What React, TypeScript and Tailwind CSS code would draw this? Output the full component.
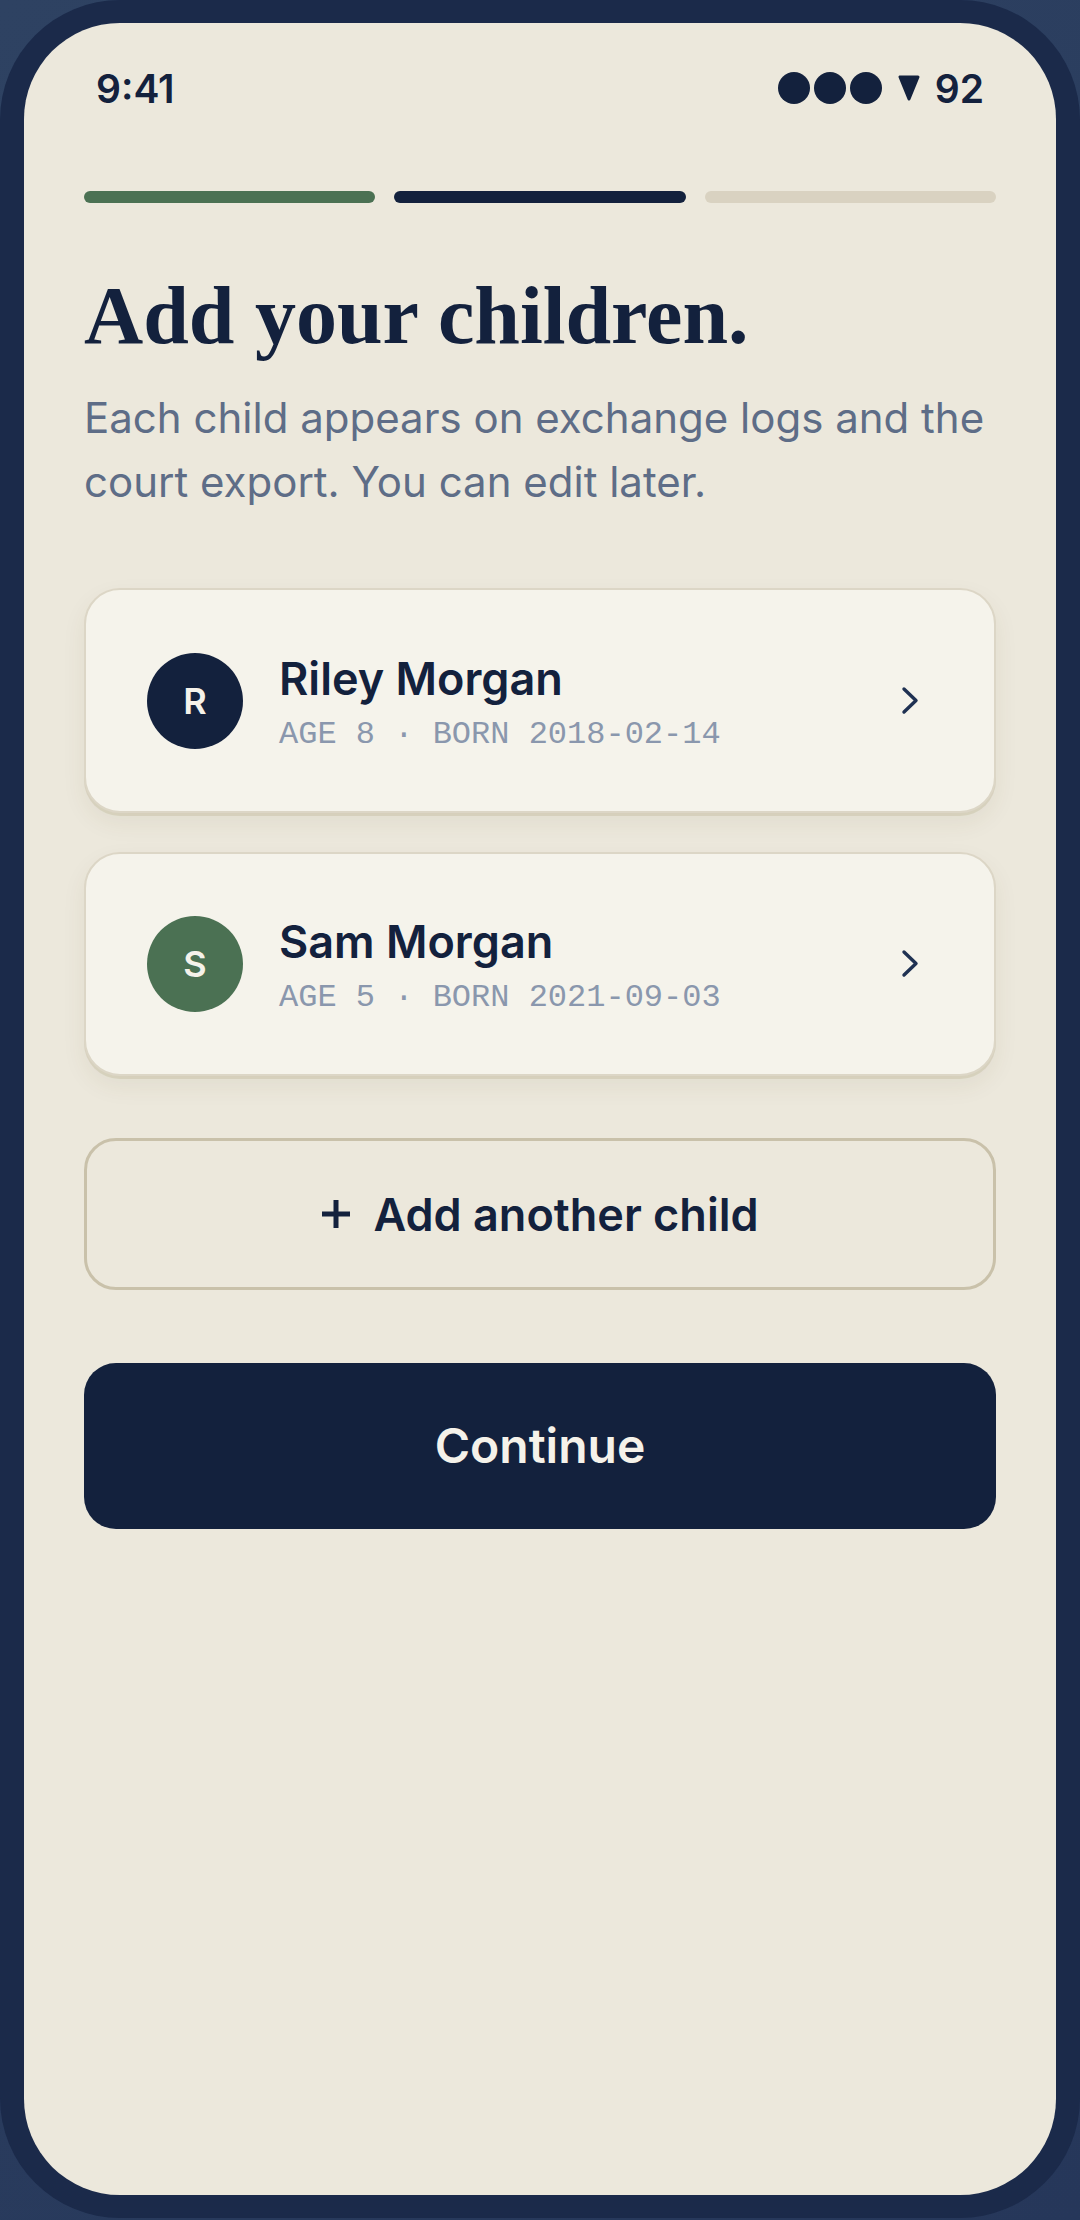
import React from "react";

const children = [
  { initial: "R", name: "Riley Morgan", meta: "AGE 8 · BORN 2018-02-14", color: "bg-[#13213d]" },
  { initial: "S", name: "Sam Morgan", meta: "AGE 5 · BORN 2021-09-03", color: "bg-[#4b7153]" },
];

function Chevron() {
  return (
    <svg width="20" height="32" viewBox="0 0 20 32" fill="none">
      <path d="M4 4 L16 15.5 L4 27" stroke="#1f3152" strokeWidth="3.4" strokeLinecap="round" strokeLinejoin="round" />
    </svg>
  );
}

function ChildCard({ c, first }: { c: (typeof children)[number]; first: boolean }) {
  return (
    <div
      className={`${first ? "mt-[74px] h-[225px]" : "mt-[39px] h-[224px]"} flex items-center rounded-[36px] border-2 border-[#dcd6c6] bg-[#f5f3eb] pl-[61px] pr-[74px] shadow-[0_3px_0_rgba(190,180,150,0.35),0_10px_24px_rgba(80,70,30,0.07)]`}
    >
      <div className={`flex h-[96px] w-[96px] shrink-0 items-center justify-center rounded-full ${c.color}`}>
        <span className="text-[36px] font-semibold leading-none text-[#f5f2ea]" style={{ fontFamily: "Inter, sans-serif" }}>
          {c.initial}
        </span>
      </div>
      <div className="ml-[36px] mt-[6px] flex flex-1 flex-col">
        <div className="text-[45px] font-semibold leading-[48px] text-[#13213d]" style={{ fontFamily: "Inter, sans-serif" }}>
          {c.name}
        </div>
        <div className="mt-[14px] text-[32px] leading-[36px] text-[#8a97ad]" style={{ fontFamily: '"Liberation Mono", monospace' }}>
          {c.meta}
        </div>
      </div>
      <Chevron />
    </div>
  );
}

export default function App() {
  return (
    <div className="h-[2220px] w-[1080px] bg-[linear-gradient(135deg,#2e4262,#26375a)]">
      <div className="h-[2218px] w-[1080px] rounded-[120px] bg-[#1b2a4a] px-[24px] py-[23px]">
        <div
          className="flex h-full w-full flex-col rounded-[96px] bg-[#ece8dc] px-[60px]"
          style={{ fontFamily: "Inter, sans-serif" }}
        >
          {/* status bar */}
          <div className="mx-[12px] mt-[43px] flex h-[44px] items-center justify-between">
            <span className="text-[39px] font-semibold leading-none text-[#13213d]">9:41</span>
            <div className="flex items-center">
              <div className="flex items-center gap-[4px]">
                <div className="h-[32px] w-[32px] rounded-full bg-[#13213d]" />
                <div className="h-[32px] w-[32px] rounded-full bg-[#13213d]" />
                <div className="h-[32px] w-[32px] rounded-full bg-[#13213d]" />
              </div>
              <svg className="ml-[15px]" width="24" height="26" viewBox="0 0 24 26">
                <path d="M3 2 L21 2 L12 24 Z" fill="#13213d" stroke="#13213d" strokeWidth="3" strokeLinejoin="round" />
              </svg>
              <span className="ml-[14px] text-[39px] font-semibold leading-none text-[#13213d]">92</span>
            </div>
          </div>

          {/* progress */}
          <div className="mt-[81px] flex h-[12px] gap-[19px]">
            <div className="flex-1 rounded-full bg-[#4b7153]" />
            <div className="flex-1 rounded-full bg-[#13213d]" />
            <div className="flex-1 rounded-full bg-[#d9d2c1]" />
          </div>

          <h1
            className="mt-[69px] text-[82px] font-bold leading-[88px] text-[#13213d]"
            style={{ fontFamily: '"Liberation Serif", serif' }}
          >
            Add your children.
          </h1>

          <p className="mt-[26px] text-[42px] leading-[64px] text-[#5e6d87]">
            Each child appears on exchange logs and the court export. You can edit later.
          </p>

          {children.map((c, i) => (
            <ChildCard key={c.name} c={c} first={i === 0} />
          ))}

          <button className="mt-[62px] flex h-[152px] w-full items-center justify-center rounded-[32px] border-[3px] border-[#c9c1aa] bg-transparent">
            <svg width="30" height="30" viewBox="0 0 30 30">
              <path d="M15 1 V29 M1 15 H29" stroke="#13213d" strokeWidth="5" />
            </svg>
            <span className="ml-[22px] text-[45px] font-semibold leading-none text-[#13213d]">Add another child</span>
          </button>

          <button className="mt-[73px] flex h-[166px] w-full items-center justify-center rounded-[32px] bg-[#13213d]">
            <span className="text-[48px] font-semibold leading-none text-[#f5f2ea]">Continue</span>
          </button>
        </div>
      </div>
    </div>
  );
}
